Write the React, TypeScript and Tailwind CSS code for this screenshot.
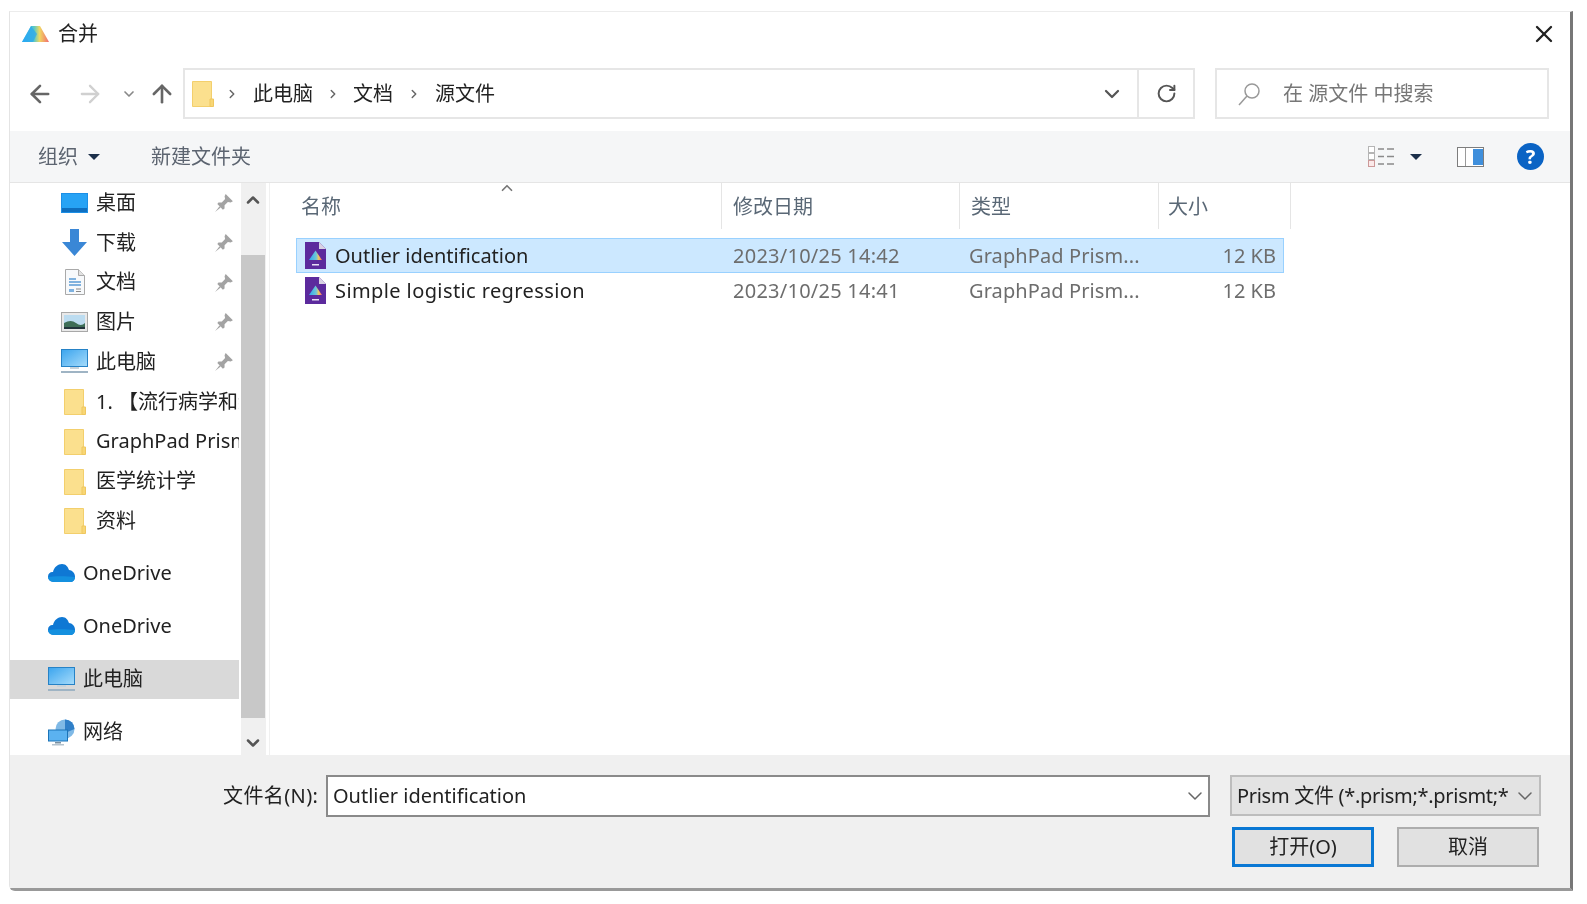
import { ArrowLeft, ArrowRight, ArrowUp, ChevronDown, ChevronUp, ChevronRight, X, RotateCw } from 'lucide-react';

const FolderIcon = ({ w = 22, h = 27 }: { w?: number; h?: number }) => (
    <svg width={w} height={h} viewBox="0 0 22 27">
        <path d="M0.5 1.5 h19 v25 h-19 z" fill="#fbe08e" stroke="#f3cf6c" />
        <path d="M18 19 h3.5 v7.5 h-3.5 z" fill="#f8d675" stroke="#efc75f" />
    </svg>
);

const PinIcon = () => (
    <svg width="20" height="20" viewBox="0 0 18 18">
        <path d="M10.5 1 L17 7.5 L15 8.5 L12.5 8 L9.5 11 L9.5 14 L8 15 L3 10 L4 8.5 L7 8.5 L10 5.5 L9.5 3 Z" fill="#a3a3a3" />
        <path d="M5 12 L1 17 L6 13 Z" fill="#a3a3a3" />
    </svg>
);

const DesktopIcon = () => (
    <svg width="27" height="20" viewBox="0 0 27 20">
        <rect width="27" height="20" fill="#1c8fe6" />
        <rect x="1" y="1" width="25" height="14" fill="#27a3f5" />
        <rect x="1" y="15" width="25" height="4" fill="#0f6fc0" />
    </svg>
);

const DownloadIcon = () => (
    <svg width="27" height="27" viewBox="0 0 27 27">
        <path d="M9 0 h9 v13 h8 L13.5 27 L1 13 h8 z" fill="#3a87d6" />
    </svg>
);

const DocIcon = () => (
    <svg width="20" height="26" viewBox="0 0 20 26">
        <path d="M0.5 0.5 h13 l6 6 v19 h-19 z" fill="#f7f9fb" stroke="#a9a9a9" />
        <path d="M13.5 0.5 v6 h6" fill="#e2e2e2" stroke="#a9a9a9" />
        <path d="M4 10 h7 M4 13 h12 M4 16 h12" stroke="#5b9bd5" strokeWidth="1.4" />
        <path d="M4 20 h5 v3 h-5 z" fill="#7fb2e0" />
        <path d="M11 20 h5 M11 22.500 h5" stroke="#888" />
    </svg>
);

const PictureIcon = () => (
    <svg width="27" height="20" viewBox="0 0 27 20">
        <rect x="0.5" y="0.5" width="26" height="19" fill="#e9e9e9" stroke="#a8a8a8" />
        <rect x="3" y="3" width="21" height="14" fill="#bcdcf0" />
        <path d="M3 11 Q10 7 15 11 T24 11 V17 H3 Z" fill="#3e6e57" />
        <path d="M3 15 H24 V17 H3 Z" fill="#23353d" />
    </svg>
);

const MonitorIcon = () => (
    <svg width="27" height="25" viewBox="0 0 27 25">
        <defs>
            <linearGradient id="screen" x1="0" y1="0" x2="1" y2="1">
                <stop offset="0" stopColor="#3aa4ee" />
                <stop offset="1" stopColor="#a7dcfb" />
            </linearGradient>
        </defs>
        <rect x="0.5" y="0.5" width="26" height="17" fill="url(#screen)" stroke="#2682c6" />
        <rect x="9" y="18" width="9" height="2" fill="#c9d3da" />
        <rect x="0" y="22" width="27" height="2" fill="#9fb4c4" />
    </svg>
);

const CloudIcon = () => (
    <svg width="27" height="18" viewBox="0 0 27 18">
        <path d="M6 18 C1 18 0 14 0 12.500 C0 9 3 7.500 5 8 C6 3 10 0 14 0 C18 0 20 3 21 6 C24 6 27 9 27 12.500 C27 16 25 18 22 18 Z" fill="#0f78d4" />
        <path d="M6 18 C2 18 0 15 0 13 C6 12 18 12 27 13 C27 16 25 18 22 18 Z" fill="#1490df" />
    </svg>
);

const NetworkIcon = () => (
    <svg width="27" height="27" viewBox="0 0 27 27">
        <circle cx="17" cy="10" r="9.500" fill="#7fb9e6" />
        <path d="M17 0.500 A9.500 9.500 0 0 1 26.500 10 L17 14 Z" fill="#2f7fc8" />
        <rect x="0.500" y="11" width="19" height="11" fill="#5bb2f0" stroke="#1c74b8" />
        <rect x="7" y="23" width="6" height="1.500" fill="#7a8fa0" />
        <rect x="4" y="25" width="12" height="1.500" fill="#b5c3ce" />
    </svg>
);

const PrismFileIcon = () => (
    <svg width="21" height="27" viewBox="0 0 21 27" className="shrink-0">
        <defs>
            <linearGradient id="tri" x1="0" y1="0" x2="1" y2="0">
                <stop offset="0" stopColor="#2fa8ee" />
                <stop offset="0.55" stopColor="#6ec6d8" />
                <stop offset="0.75" stopColor="#f4c85a" />
                <stop offset="1" stopColor="#ef5f6d" />
            </linearGradient>
        </defs>
        <path d="M0 0 h14 l7 7 v20 h-21 z" fill="#5c2a9d" />
        <path d="M14 0 l7 7 h-7 z" fill="#d8d2e4" />
        <path d="M10.500 8.500 L17 18 H4 Z" fill="url(#tri)" />
        <rect x="7" y="22" width="7" height="1.500" fill="#e8dff5" />
    </svg>
);

const AppLogo = () => (
    <svg width="27" height="17" viewBox="0 0 27 17">
        <defs>
            <linearGradient id="logo" x1="0" y1="1" x2="1" y2="1">
                <stop offset="0" stopColor="#22b4f4" />
                <stop offset="0.45" stopColor="#5ac8c4" />
                <stop offset="0.65" stopColor="#f0d860" />
                <stop offset="1" stopColor="#f26a72" />
            </linearGradient>
        </defs>
        <path d="M9 0 H18 L27 16 H0 Z" fill="url(#logo)" />
        <path d="M9 0 L0 16 H11 L15 8 Z" fill="#2ba5f2" opacity="0.7" />
    </svg>
);

const ViewIcon = () => (
    <svg width="27" height="22" viewBox="0 0 27 22">
        <rect x="0.500" y="0.500" width="6" height="6" fill="#fff" stroke="#b5b5b5" />
        <rect x="0.500" y="7.500" width="6" height="6" fill="#fff" stroke="#b5b5b5" />
        <rect x="0.500" y="14.500" width="6" height="6" fill="#fbe9e9" stroke="#c99" />
        <path d="M10 3 h6 M19 3 h7 M10 10.500 h6 M19 10.500 h7 M10 18 h6 M19 18 h7" stroke="#8a8a8a" strokeWidth="1.500" />
    </svg>
);

const PaneIcon = () => (
    <svg width="27" height="20" viewBox="0 0 27 20">
        <rect x="0.500" y="0.500" width="26" height="19" fill="#fff" stroke="#7d7d7d" />
        <rect x="16" y="2" width="10" height="16" fill="#3f8fdc" />
        <rect x="8" y="1" width="1" height="18" fill="#9a9a9a" />
    </svg>
);

const SIDEBAR_TOP = [
    { label: '桌面', icon: <DesktopIcon />, pin: true },
    { label: '下载', icon: <DownloadIcon />, pin: true },
    { label: '文档', icon: <DocIcon />, pin: true },
    { label: '图片', icon: <PictureIcon />, pin: true },
    { label: '此电脑', icon: <MonitorIcon />, pin: true },
    { label: '1. 【流行病学和统计学', icon: <FolderIcon />, pin: false },
    { label: 'GraphPad Prism', icon: <FolderIcon />, pin: false },
    { label: '医学统计学', icon: <FolderIcon />, pin: false },
    { label: '资料', icon: <FolderIcon />, pin: false },
];

const SIDEBAR_ROOT = [
    { label: 'OneDrive', icon: <CloudIcon />, active: false },
    { label: 'OneDrive', icon: <CloudIcon />, active: false },
    { label: '此电脑', icon: <MonitorIcon />, active: true },
    { label: '网络', icon: <NetworkIcon />, active: false },
];

const FILES = [
    { name: 'Outlier identification', date: '2023/10/25 14:42', selected: true, nameClass: '' },
    { name: 'Simple logistic regression', date: '2023/10/25 14:41', selected: false, nameClass: 'tracking-[0.4px]' },
];

const HEADERS = [
    { label: '名称', width: 'w-[425px]', pad: 'pl-[4px]' },
    { label: '修改日期', width: 'w-[238px]', pad: 'pl-[11px]' },
    { label: '类型', width: 'w-[199px]', pad: 'pl-[11px]' },
    { label: '大小', width: 'w-[132px]', pad: 'pl-[9px]' },
];

const App = () => {
    return (
        <div className="w-[1587px] h-[904px] bg-white pt-[11px] pl-[9px] overflow-hidden [font-family:'Noto_Sans','Noto_Sans_CJK_SC',sans-serif] text-[20px] leading-none text-[#222] blur-[0.7px]">
            <div className="w-[1564px] h-[880px] flex flex-col bg-white border-t border-t-[#ececec] border-l border-l-[#e4e4e4] border-r-[3px] border-r-[#777] border-b-[3px] border-b-[#999] rounded-bl-md">
                {/* Title bar */}
                <div className="h-[44px] flex items-center pl-[12px] pr-[12px] shrink-0">
                    <AppLogo />
                    <span className="ml-[9px] text-[#222]">合并</span>
                    <X className="ml-auto text-[#222]" size={28} strokeWidth={2} />
                </div>

                {/* Navigation */}
                <div className="h-[75px] flex items-center pl-[16px] pr-[21px] shrink-0">
                    <ArrowLeft className="text-[#666]" size={28} strokeWidth={2.25} />
                    <ArrowRight className="ml-[22px] text-[#d0d0d0]" size={28} strokeWidth={2} />
                    <ChevronDown className="ml-[17px] text-[#888]" size={16} strokeWidth={2.5} />
                    <ArrowUp className="ml-[11px] text-[#666]" size={28} strokeWidth={2.25} />
                    <div className="ml-[7px] h-[51px] flex-1 flex items-center border-2 border-[#e6e6e6] bg-white">
                        <div className="ml-[7px] flex items-center"><FolderIcon /></div>
                        <ChevronRight className="ml-[11px] text-[#666]" size={14} strokeWidth={2.5} />
                        <span className="ml-[14px] text-[#222]">此电脑</span>
                        <ChevronRight className="ml-[13px] text-[#666]" size={14} strokeWidth={2.5} />
                        <span className="ml-[13px] text-[#222]">文档</span>
                        <ChevronRight className="ml-[14px] text-[#666]" size={14} strokeWidth={2.5} />
                        <span className="ml-[14px] text-[#222]">源文件</span>
                        <ChevronDown className="ml-auto mr-[13px] text-[#555]" size={24} strokeWidth={2.25} />
                        <div className="h-full w-[56px] border-l-2 border-[#e6e6e6] flex items-center justify-center">
                            <RotateCw className="text-[#555]" size={21} strokeWidth={2.25} />
                        </div>
                    </div>
                    <div className="ml-[20px] h-[51px] w-[334px] flex items-center border-2 border-[#e6e6e6] pl-[20px]">
                        <svg width="24" height="24" viewBox="0 0 24 24" fill="none" stroke="#999" strokeWidth="1.500">
                            <circle cx="15" cy="9" r="7" />
                            <path d="M10 14 L2 23" />
                        </svg>
                        <span className="ml-[22px] text-[#777]">在 源文件 中搜索</span>
                    </div>
                </div>

                {/* Toolbar */}
                <div className="h-[52px] flex items-center bg-[#f5f6f7] border-b border-[#e5e5e5] pl-[28px] pr-[26px] shrink-0">
                    <span className="text-[#5c6470]">组织</span>
                    <span className="ml-[10px] w-0 h-0 border-x-[6px] border-x-transparent border-t-[6px] border-t-[#1c2f4a]"></span>
                    <span className="ml-[51px] text-[#5c6470]">新建文件夹</span>
                    <div className="ml-auto flex items-center">
                        <ViewIcon />
                        <span className="ml-[15px] w-0 h-0 border-x-[6px] border-x-transparent border-t-[6px] border-t-[#1c2f4a]"></span>
                        <div className="ml-[35px]"><PaneIcon /></div>
                        <div className="ml-[33px] w-[27px] h-[27px] rounded-full bg-[#0a63c4] text-white font-bold flex items-center justify-center">?</div>
                    </div>
                </div>

                {/* Body */}
                <div className="h-[572px] flex shrink-0">
                    <div className="w-[229px] shrink-0 overflow-hidden flex flex-col">
                        <div className="flex flex-col">
                            {SIDEBAR_TOP.map((item) => (
                                <div key={item.label} className="h-[39.750px] flex items-center relative">
                                    <div className="w-[27px] ml-[51px] flex justify-center shrink-0">{item.icon}</div>
                                    <span className="ml-[8px] whitespace-nowrap text-[#222]">{item.label}</span>
                                    {item.pin && <div className="absolute left-[204px] top-[10px]"><PinIcon /></div>}
                                </div>
                            ))}
                        </div>
                        <div className="flex flex-col gap-[14px] pt-[13px]">
                            {SIDEBAR_ROOT.map((item, i) => (
                                <div key={i} className={`h-[39px] flex items-center pl-[38px] ${item.active ? 'bg-[#d9d9d9]' : ''}`}>
                                    <div className="w-[27px] flex justify-center shrink-0">{item.icon}</div>
                                    <span className="ml-[8px] whitespace-nowrap text-[#222]">{item.label}</span>
                                </div>
                            ))}
                        </div>
                    </div>

                    {/* Scrollbar */}
                    <div className="w-[25px] ml-[2px] shrink-0 bg-[#f0f0f0] flex flex-col items-center border-r border-[#f0f0f0]">
                        <div className="h-[33px] flex items-center justify-center"><ChevronUp className="text-[#555]" size={20} strokeWidth={3} /></div>
                        <div className="w-full h-[463px] bg-[#c8c8c8] mt-[39px]"></div>
                        <div className="flex-1 flex items-center justify-center pt-[12px]"><ChevronDown className="text-[#555]" size={20} strokeWidth={3} /></div>
                    </div>

                    {/* File list */}
                    <div className="flex-1 pl-[27px] border-l border-[#f0f0f0] ml-[3px]">
                        <div className="h-[46px] flex relative">
                            {HEADERS.map((h) => (
                                <div key={h.label} className={`${h.width} ${h.pad} h-full border-r border-[#e5e5e5] flex items-center pt-[2px] text-[#5a6876]`}>{h.label}</div>
                            ))}
                            <ChevronUp className="absolute left-[201px] top-[-4px] text-[#777]" size={18} strokeWidth={2.25} />
                        </div>
                        <div className="mt-[9px] -ml-[1px] w-[988px] flex flex-col">
                            {FILES.map((file) => (
                                <div key={file.name} className={`h-[35px] flex items-center border ${file.selected ? 'bg-[#cce8ff] border-[#99d1ff]' : 'border-transparent'}`}>
                                    <div className="ml-[8px]"><PrismFileIcon /></div>
                                    <span className={`ml-[9px] w-[398px] text-[#222] whitespace-nowrap ${file.nameClass}`}>{file.name}</span>
                                    <span className="w-[236px] text-[#6d6d6d] whitespace-nowrap tracking-[0.25px]">{file.date}</span>
                                    <span className="w-[200px] text-[#6d6d6d] whitespace-nowrap tracking-[0.1px]">GraphPad Prism...</span>
                                    <span className="w-[107px] text-right text-[#6d6d6d] whitespace-nowrap">12 KB</span>
                                </div>
                            ))}
                        </div>
                    </div>
                </div>

                {/* Footer */}
                <div className="flex-1 bg-[#f0f0f0] relative pl-[213px] pr-[28px] pt-[20px]">
                    <div className="flex items-center">
                        <span className="w-[101px] text-[#222] whitespace-nowrap tracking-[0.4px]">文件名(N):</span>
                        <div className="ml-[2px] w-[884px] h-[42px] flex items-center border-2 border-[#8a8a8a] bg-white pl-[5px] pr-[1px]">
                            <span className="text-[#222]">Outlier identification</span>
                            <ChevronDown className="ml-auto text-[#666]" size={24} strokeWidth={1.5} />
                        </div>
                        <div className="ml-[20px] w-[311px] h-[41px] -mt-[1px] flex items-center border-2 border-[#bdbdbd] bg-[#e3e3e3] pl-[5px] pr-[2px]">
                            <span className="text-[#222] whitespace-nowrap tracking-[-0.3px]">Prism 文件 (*.prism;*.prismt;*</span>
                            <ChevronDown className="ml-auto shrink-0 text-[#666]" size={24} strokeWidth={1.5} />
                        </div>
                    </div>
                    <div className="flex justify-end gap-[23px] mt-[10px] pr-[3px]">
                        <div className="w-[142px] h-[40px] flex items-center justify-center bg-[#e1e1e1] border-[3px] border-[#0a78d4] text-[#222]">打开(O)</div>
                        <div className="w-[142px] h-[40px] flex items-center justify-center bg-[#e1e1e1] border-2 border-[#adadad] text-[#222]">取消</div>
                    </div>
                </div>
            </div>
        </div>
    );
};

export default App;
